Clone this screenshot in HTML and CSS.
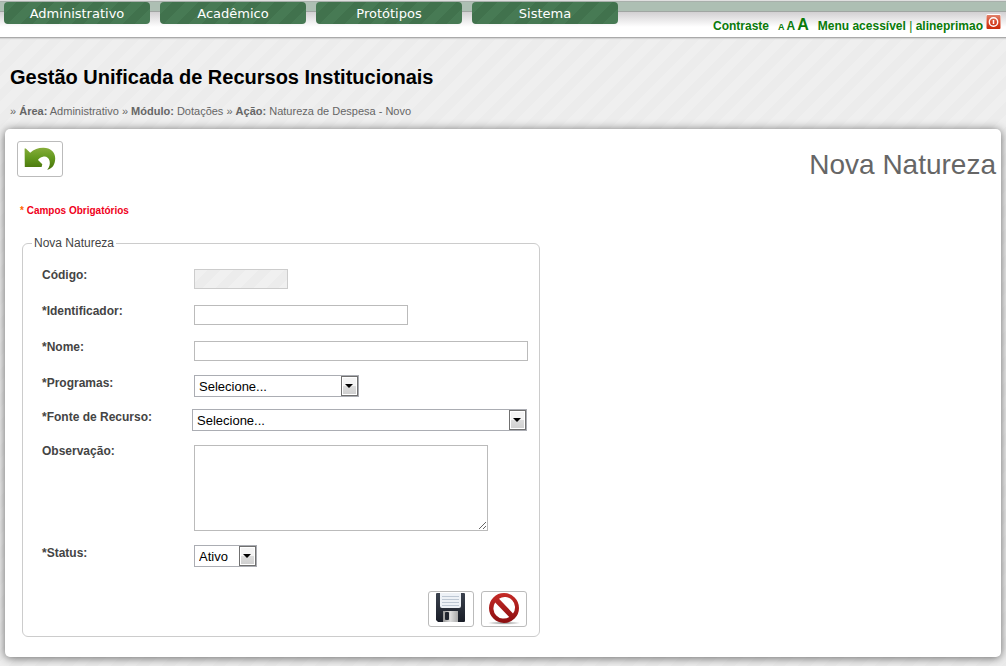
FILE: index.html
```html
<!DOCTYPE html>
<html lang="pt-BR">
<head>
<meta charset="utf-8">
<meta name="viewport" content="width=device-width, initial-scale=1">
<title>Gestão Unificada de Recursos Institucionais</title>
<link rel="stylesheet" href="styles.css">
</head>
<body>
<header class="topbar">
  <nav class="menu">
    <a class="menu-item" href="#">Administrativo</a>
    <a class="menu-item" href="#">Acadêmico</a>
    <a class="menu-item" href="#">Protótipos</a>
    <a class="menu-item" href="#">Sistema</a>
  </nav>
  <div class="tools">
    <a href="#">Contraste</a>
    <span class="sizes"><a class="size-s" href="#">A</a><a class="size-m" href="#">A</a><a class="size-l" href="#">A</a></span>
    <span><a href="#">Menu acessível</a> <span class="divider">|</span> <a href="#">alineprimao</a></span>
    <a class="logout" href="#" aria-label="Sair">
      <svg width="15" height="16" viewBox="0 0 15 16">
        <defs><linearGradient id="red" x1="0" y1="0" x2="0" y2="1"><stop offset="0" stop-color="#e0826c"/><stop offset=".5" stop-color="#d8492b"/><stop offset="1" stop-color="#c92c0c"/></linearGradient></defs>
        <rect width="15" height="16" rx="2" fill="#fff"/>
        <rect x=".5" y="1" width="14" height="14" rx="1" fill="url(#red)"/>
        <circle cx="7.5" cy="8" r="4.2" fill="none" stroke="#fff" stroke-width="1.4"/>
        <path d="M7.5 6v4" stroke="#fff" stroke-width="1.5"/>
      </svg>
    </a>
  </div>
</header>

<div class="intro">
  <h1 class="site-title">Gestão Unificada de Recursos Institucionais</h1>
  <p class="crumbs">» <b>Área:</b> Administrativo » <b>Módulo:</b> Dotações » <b>Ação:</b> Natureza de Despesa - Novo</p>
</div>

<main class="panel">
  <div class="panel-head">
    <button class="icon-button" type="button" aria-label="Voltar">
      <svg width="32" height="24" viewBox="0 0 32 24">
        <defs><linearGradient id="leaf" x1="0" y1="0" x2="0" y2="1"><stop offset="0" stop-color="#86ad3a"/><stop offset=".45" stop-color="#64991f"/><stop offset="1" stop-color="#47720a"/></linearGradient></defs>
        <path d="M.6 1.600 1.800 1.600 6.200 5.800C10 2.200 14.500 .6 19.500 .7 26.500 .8 31.200 5 31.200 11.200 31.200 17.500 28.500 21.500 23.200 22.800 25.500 20 26.300 17 25.600 14 24.800 10.500 22 9 19 9.700 16.500 10.300 14.800 11.600 14 13L18.300 17.200 17.600 20H.8Z" fill="url(#leaf)"/>
      </svg>
    </button>
    <h2 class="page-title">Nova Natureza</h2>
  </div>
  <p class="required"><span class="star">*</span> Campos Obrigatórios</p>

  <form>
    <fieldset class="card">
      <legend>Nova Natureza</legend>
      <div class="row">
        <label for="codigo">Código:</label>
        <input class="field w-small" id="codigo" type="text" disabled>
      </div>
      <div class="row">
        <label for="ident">*Identificador:</label>
        <input class="field w-medium" id="ident" type="text">
      </div>
      <div class="row">
        <label for="nome">*Nome:</label>
        <input class="field w-large" id="nome" type="text">
      </div>
      <div class="row row-select">
        <label for="prog">*Programas:</label>
        <span class="select w-program"><select id="prog"><option>Selecione...</option></select></span>
      </div>
      <div class="row row-select row-wide">
        <label for="fonte">*Fonte de Recurso:</label>
        <span class="select w-source"><select id="fonte"><option>Selecione...</option></select></span>
      </div>
      <div class="row">
        <label for="obs">Observação:</label>
        <textarea class="field" id="obs"></textarea>
      </div>
      <div class="row row-select">
        <label for="status">*Status:</label>
        <span class="select w-status"><select id="status"><option>Ativo</option></select></span>
      </div>
      <div class="actions">
        <button class="icon-button" type="submit" aria-label="Salvar">
          <svg width="30" height="32" viewBox="0 0 30 32">
            <defs>
              <linearGradient id="disk" x1="0" y1="0" x2="0" y2="1"><stop offset="0" stop-color="#3b424e"/><stop offset="1" stop-color="#191d27"/></linearGradient>
              <linearGradient id="metal" x1="0" y1="0" x2="1" y2="0"><stop offset="0" stop-color="#999"/><stop offset=".5" stop-color="#ddd"/><stop offset="1" stop-color="#aaa"/></linearGradient>
            </defs>
            <path d="M1 0H28Q29 0 29 1V28Q29 29 28 29H2L0 27V1Q0 0 1 0Z" fill="url(#disk)"/>
            <path d="M4 0h21v13q0 2-2 2h-17q-2 0-2-2Z" fill="#edf1f6"/>
            <path d="M6 3.500h17M6 6.500h17M6 9.500h17M6 12.500h17" stroke="#bdc7d3"/>
            <path d="M7 18h15v11H7Z" fill="url(#metal)"/>
            <rect x="9" y="19" width="4" height="8" rx="1" fill="#20252f"/>
          </svg>
        </button>
        <button class="icon-button" type="button" aria-label="Cancelar">
          <svg width="32" height="32" viewBox="0 0 32 32">
            <defs>
              <linearGradient id="stop" x1="0" y1="0" x2="0" y2="1"><stop offset="0" stop-color="#c52b27"/><stop offset="1" stop-color="#8c0e10"/></linearGradient>
              <radialGradient id="ground"><stop offset="0" stop-color="#777"/><stop offset="1" stop-color="#ccc" stop-opacity=".4"/></radialGradient>
            </defs>
            <ellipse cx="16" cy="30" rx="15.500" ry="1.500" fill="url(#ground)"/>
            <path fill="url(#stop)" fill-rule="evenodd" d="M16 0a15 15 0 1 1 0 30a15 15 0 0 1 0-30ZM11 5.800 25 20.500A10.300 10.300 0 0 0 11 5.800ZM7.200 9.500A10.300 10.300 0 0 0 21.200 24Z"/>
          </svg>
        </button>
      </div>
    </fieldset>
  </form>
</main>
</body>
</html>
```
FILE: styles.css
```css
*, *::before, *::after { box-sizing: border-box; }

body {
  margin: 0;
  min-height: 100vh;
  font: 12px/14px "Liberation Sans", Arial, sans-serif;
  color: #444;
  background: repeating-linear-gradient(135deg, #efefef 0 9px, #ececec 9px 18px);
}

h1, h2, p { margin: 0; }
a { color: inherit; text-decoration: none; }
svg { display: block; }

.topbar {
  display: flex;
  justify-content: space-between;
  height: 38px;
  padding: 2px 5px 0 4px;
  border-bottom: 1px solid #aaa;
  box-shadow: 0 1px 1px #d4d4d4;
  background: linear-gradient(#e0e0e0 0 1px, #a8b0ab 1px 2px, #adbfb3 2px 11px, #a0a5a2 11px 12px, #d2d0d2 12px, #fff 27px);
}

.menu { display: flex; gap: 10px; }

.menu-item {
  width: 146px;
  height: 22px;
  border-radius: 4px;
  font: 13px/23px "DejaVu Sans", Verdana, sans-serif;
  text-align: center;
  color: #fff;
  background: repeating-linear-gradient(135deg, #477a54 0 9px, #41724d 9px 18px);
}

.tools {
  display: flex;
  align-items: baseline;
  gap: 9px;
  padding-top: 16px;
  font-weight: bold;
  color: #0a7a0a;
}

.sizes { display: flex; align-items: baseline; gap: 2px; }
.size-s { font-size: 9px; }
.size-m { font-size: 12px; }
.size-l { font-size: 16px; }
.divider { font-weight: normal; }
.logout { align-self: flex-start; margin: -4px 0 0 -6px; }

.intro { padding: 27px 10px 10px; }

.site-title {
  font-size: 20px;
  line-height: 24px;
  color: #000;
}

.crumbs {
  margin-top: 15px;
  font-size: 11px;
  color: #666;
}

.panel {
  margin: 1px 5px 9px;
  padding: 12px 5px 20px 12px;
  border-radius: 5px;
  background: #fff;
  box-shadow: 0 1px 10px #666;
}

.panel-head {
  display: flex;
  justify-content: space-between;
  align-items: flex-start;
}

.icon-button {
  display: flex;
  align-items: center;
  justify-content: center;
  width: 46px;
  height: 36px;
  padding: 0;
  border: 1px solid #bbb;
  border-radius: 3px;
  background: #fff;
}

.page-title {
  padding-top: 8px;
  font-size: 28px;
  line-height: 32px;
  font-weight: normal;
  color: #666;
}

.required {
  margin: 23px 0 19px 3px;
  font-size: 10px;
  font-weight: bold;
  color: #f00020;
}

.star { color: #f60; }

.card {
  max-width: 518px;
  margin: 0 0 0 5px;
  padding: 17px 11px 9px 19px;
  border: 1px solid #ccc;
  border-radius: 6px;
}

.card legend {
  margin-left: -10px;
  padding: 0 2px;
  line-height: 13px;
}

.row {
  display: grid;
  grid-template-columns: 152px 1fr;
  align-items: start;
  padding: 1px 0 14px;
}

.row label { font-weight: bold; }
.field { margin-top: 1px; }
.row-select { padding: 0 0 12px; }
.row-select label { padding-top: 1px; }
.row-wide { grid-template-columns: 150px 1fr; }

.field {
  display: block;
  height: 20px;
  max-width: 100%;
  padding: 2px 4px;
  border: 1px solid #bbb;
  border-radius: 0;
  font: 13px/16px "Liberation Sans", Arial, sans-serif;
  background: #fff;
}

.field:disabled {
  border-color: #ccc;
  background: repeating-linear-gradient(135deg, #f0f0f0 0 9px, #ececec 9px 18px);
}

textarea.field { width: 294px; height: 86px; }

.w-small { width: 94px; }
.w-medium { width: 214px; }
.w-large { width: 334px; }
.w-program { width: 165px; }
.w-source { width: 335px; }
.w-status { width: 63px; }

.select {
  position: relative;
  display: block;
  max-width: 100%;
  height: 22px;
}

.select select {
  appearance: none;
  display: block;
  width: 100%;
  height: 22px;
  padding: 1px 18px 0 4px;
  border: 1px solid #abadb3;
  border-radius: 0;
  font: 13px/19px "Liberation Sans", Arial, sans-serif;
  color: #000;
  background: #fff;
}

.select::before {
  content: "";
  position: absolute;
  top: 1px;
  right: 1px;
  width: 17px;
  height: 20px;
  border: 1px solid #707070;
  box-shadow: inset 0 0 0 1px #fff;
  background: linear-gradient(#f4f4f4 0 50%, #dcdcdc 50%, #cfcfcf);
  pointer-events: none;
}

.select::after {
  content: "";
  position: absolute;
  top: 9px;
  right: 6px;
  border: 4px solid transparent;
  border-top-color: #000;
  border-bottom: 0;
  pointer-events: none;
}

.actions {
  display: flex;
  justify-content: flex-end;
  gap: 7px;
  margin: 12px 1px 0 0;
}
```
